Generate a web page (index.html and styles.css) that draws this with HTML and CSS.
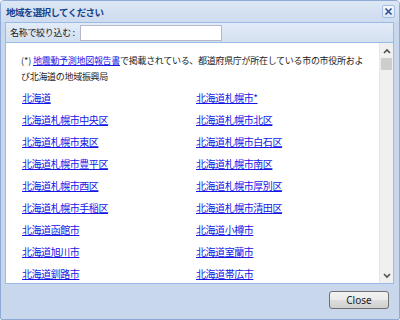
FILE: index.html
```html
<!DOCTYPE html>
<html lang="ja">
<head>
<meta charset="utf-8">
<title>地域を選択してください</title>
<link rel="stylesheet" href="styles.css">
</head>
<body>
<div class="win">
  <div class="win-title">
    <span class="win-title-text">地域を選択してください</span>
    <span class="tool-close"><svg width="9" height="9" viewBox="0 0 9 9"><path d="M1.5 1.5 L7.5 7.5 M7.5 1.5 L1.5 7.5" stroke="#2a4f8f" stroke-width="1.6" fill="none"/></svg></span>
  </div>
  <div class="panel">
    <div class="tbar">
      <label class="tbar-label" for="flt">名称で絞り込む :</label>
      <input id="flt" class="tbar-input" type="text">
    </div>
    <div class="pbody">
      <div class="scroll">
        <p class="note"><span class="mark">(*)</span> <a href="#">地震動予測地図報告書</a>で掲載されている、都道府県庁が所在している市の市役所および北海道の地域振興局</p>
        <div class="grid">
          <a href="#">北海道</a><a href="#">北海道札幌市*</a>
          <a href="#">北海道札幌市中央区</a><a href="#">北海道札幌市北区</a>
          <a href="#">北海道札幌市東区</a><a href="#">北海道札幌市白石区</a>
          <a href="#">北海道札幌市豊平区</a><a href="#">北海道札幌市南区</a>
          <a href="#">北海道札幌市西区</a><a href="#">北海道札幌市厚別区</a>
          <a href="#">北海道札幌市手稲区</a><a href="#">北海道札幌市清田区</a>
          <a href="#">北海道函館市</a><a href="#">北海道小樽市</a>
          <a href="#">北海道旭川市</a><a href="#">北海道室蘭市</a>
          <a href="#">北海道釧路市</a><a href="#">北海道帯広市</a>
        </div>
      </div>
      <div class="vscroll">
        <span class="arrow"><svg width="8" height="6" viewBox="0 0 8 6"><path d="M1 5 L4 2 L7 5" stroke="#505050" stroke-width="1.6" fill="none"/></svg></span>
        <span class="thumb"></span>
        <span class="track"></span>
        <span class="arrow"><svg width="8" height="6" viewBox="0 0 8 6"><path d="M1 1 L4 4 L7 1" stroke="#505050" stroke-width="1.6" fill="none"/></svg></span>
      </div>
    </div>
  </div>
  <div class="footer">
    <button class="btn" type="button">Close</button>
  </div>
</div>
</body>
</html>
```
FILE: styles.css
```css
html, body {
  margin: 0;
  padding: 0;
  background: #ffffff;
}
.win {
  box-sizing: border-box;
  width: 400px;
  height: 320px;
  border: 1px solid #8eaad6;
  border-radius: 4px 4px 2px 2px;
  background: #c8d7ec;
  padding: 0 5px 0 4px;
  display: flex;
  flex-direction: column;
  font-family: "Noto Sans CJK JP", "Noto Sans", sans-serif;
}
.win-title {
  height: 21px;
  display: flex;
  align-items: center;
  justify-content: space-between;
  background: linear-gradient(#dde7f5, #cedcef);
  margin-left: -4px;
  margin-right: -5px;
  padding-left: 5px;
  padding-right: 4px;
  border-radius: 3px 3px 0 0;
}
.win-title-text {
  font-size: 9.5px;
  font-weight: bold;
  letter-spacing: -0.6px;
  color: #15428b;
}
.tool-close {
  box-sizing: border-box;
  width: 13px;
  height: 13px;
  border: 1px solid #a3bde3;
  border-radius: 2px;
  background: linear-gradient(#f5f8fd, #dbe6f5);
  display: flex;
  align-items: center;
  justify-content: center;
}
.panel {
  flex: 0 0 auto;
  border: 1px solid #99bbe8;
  display: flex;
  flex-direction: column;
}
.tbar {
  height: 19px;
  display: flex;
  align-items: center;
  padding: 0 0 0 4px;
  background: linear-gradient(#e3ebf7, #d3e0f1);
  border-bottom: 1px solid #99bbe8;
}
.tbar-label {
  font-size: 9px;
  letter-spacing: -0.3px;
  color: #1a1a1a;
  width: 70px;
}
.tbar-input {
  box-sizing: border-box;
  width: 142px;
  height: 16px;
  margin: 0;
  border: 1px solid #b5b8c8;
  background: #fff;
  padding: 0 2px;
}
.pbody {
  height: 240px;
  display: flex;
  background: #fff;
}
.scroll {
  flex: 1;
  overflow: hidden;
  padding: 10px 0 0 15px;
}
.note {
  margin: 0 12px 2px 0;
  font-size: 9px;
  line-height: 16px;
  letter-spacing: -0.3px;
  color: #222;
}
.mark {
  letter-spacing: 0;
}
a {
  color: #1515e6;
  text-decoration: underline;
}
.grid {
  display: grid;
  grid-template-columns: 174px 174px;
  grid-auto-rows: 22px;
  align-items: center;
  padding-left: 1px;
}
.grid a {
  font-size: 10px;
  letter-spacing: -0.45px;
  justify-self: start;
  line-height: 14px;
}
.vscroll {
  width: 13px;
  flex: 0 0 13px;
  background: #f0f0f0;
  display: flex;
  flex-direction: column;
  align-items: center;
  border-left: 1px solid #e6e6e6;
}
.arrow {
  height: 15px;
  display: flex;
  align-items: center;
  justify-content: center;
}
.thumb {
  width: 11px;
  height: 12px;
  background: #cdcdcd;
}
.track {
  flex: 1;
}
.footer {
  flex: 1;
  display: flex;
  align-items: center;
  justify-content: flex-end;
  padding: 0 5px 4px 0;
}
.btn {
  box-sizing: border-box;
  width: 60px;
  height: 18px;
  margin: 0;
  border: 1px solid #707070;
  border-radius: 3px;
  background: linear-gradient(#f2f2f2 0%, #ebebeb 50%, #dddddd 51%, #cfcfcf 100%);
  font-family: "Noto Sans", "Open Sans", sans-serif;
  font-size: 10px;
  color: #222;
  padding: 0;
}
```
